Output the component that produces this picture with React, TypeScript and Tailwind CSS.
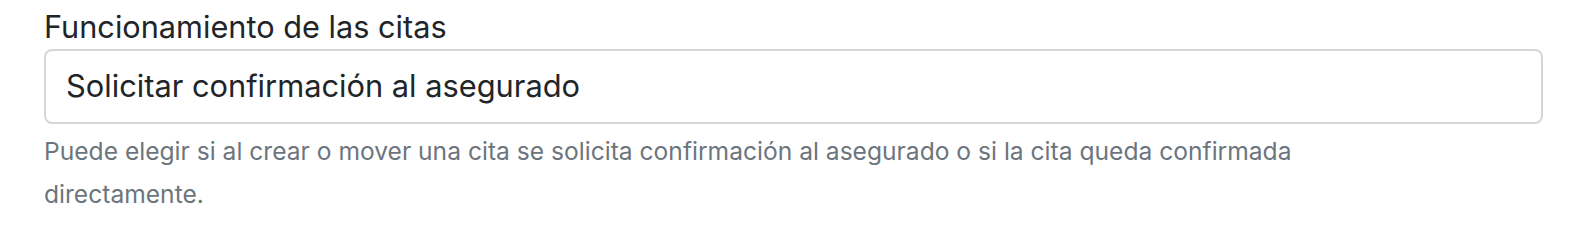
import React from 'react';

const App = () => {
    return (
        <div className="w-[1570px] h-[230px] bg-white pl-[44px] pt-[9px] font-['Inter',sans-serif]">
            <div className="w-[1499px]">
                <label className="block text-[30.7px] leading-[36px] text-[#212529] mb-[4px]">
                    Funcionamiento de las citas
                </label>
                <div className="h-[75px] border-2 border-[#d3d7dc] rounded-[8px] px-[20px] flex items-center text-[30.8px] text-[#212529]">
                    Solicitar confirmación al asegurado
                </div>
                <p className="max-w-[1300px] mt-[6px] text-[24.6px] leading-[43px] text-[#6c757d]">
                    Puede elegir si al crear o mover una cita se solicita confirmación al asegurado o si la cita queda confirmada directamente.
                </p>
            </div>
        </div>
    );
};

export default App;
